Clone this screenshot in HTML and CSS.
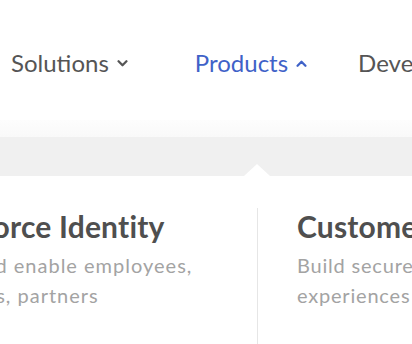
FILE: index.html
```html
<!DOCTYPE html>
<html lang="en">
<head>
    <meta charset="UTF-8">
    <meta name="viewport" content="width=device-width, initial-scale=1.0">
    <title>Products menu</title>
    <link rel="stylesheet" href="styles.css">
</head>
<body>
    <nav class="nav">
        <a class="nav-item nav-item-first">Solutions
            <svg class="chevron" viewBox="0 0 12 8" width="11" height="7"><path d="M1.5 1.5 L6 6 L10.5 1.5" /></svg>
        </a>
        <a class="nav-item active">Products
            <svg class="chevron" viewBox="0 0 12 8" width="11" height="7"><path d="M1.5 6.5 L6 2 L10.5 6.5" /></svg>
        </a>
        <a class="nav-item">Developers</a>
    </nav>

    <div class="shade"></div>
    <div class="band"></div>

    <section class="panel">
        <div class="col col-left">
            <h2 class="col-title">Workforce Identity</h2>
            <p class="col-text">Protect and enable employees, contractors, partners</p>
        </div>
        <div class="col col-right">
            <h2 class="col-title">Customer Identity</h2>
            <p class="col-text">Build secure, seamless customer experiences</p>
        </div>
    </section>
</body>
</html>
```

FILE: styles.css
```css
html, body {
    margin: 0;
    padding: 0;
    width: 412px;
    height: 344px;
    overflow: hidden;
    background: #fff;
    font-family: Lato, "Liberation Sans", sans-serif;
}

.nav {
    display: flex;
    align-items: flex-start;
    gap: 51px;
    height: 120px;
    box-sizing: border-box;
    padding: 48px 0 0 11px;
    white-space: nowrap;
}
.nav-item {
    display: flex;
    align-items: center;
    gap: 8px;
    font-size: 24px;
    line-height: 29px;
    color: #555;
}
.nav-item-first {
    margin-right: 16px;
}
.nav-item.active {
    color: #3f62c8;
}
.chevron {
    margin-top: 2px;
}
.chevron path {
    fill: none;
    stroke: currentColor;
    stroke-width: 2.6;
    stroke-linecap: round;
    stroke-linejoin: round;
}

.shade {
    height: 17px;
    background: linear-gradient(#fdfdfd, #f9f9f9);
}
.band {
    position: relative;
    height: 39px;
    background: #f0f0f0;
}
.band::after {
    content: "";
    position: absolute;
    left: 244px;
    bottom: 0;
    border-left: 13px solid transparent;
    border-right: 13px solid transparent;
    border-bottom: 12px solid #fff;
}

.panel {
    display: flex;
    padding-top: 32px;
}
.col {
    flex: none;
    box-sizing: border-box;
}
.col-left {
    width: 350px;
    margin-left: -93px;
}
.col-right {
    width: 400px;
    padding-left: 39px;
    border-left: 1px solid #e6e6e6;
    height: 140px;
}
.col-title {
    margin: 0;
    font-size: 30px;
    line-height: 36px;
    font-weight: 700;
    color: #4f4f4f;
    letter-spacing: 0.2px;
    white-space: nowrap;
}
.col-text {
    margin: 6px 0 0;
    max-width: 330px;
    font-size: 20px;
    line-height: 30px;
    letter-spacing: 1px;
    color: #a3a3a3;
}
.col-left .col-text {
    margin-left: -12px;
}
.col-right .col-text {
    max-width: 340px;
    letter-spacing: 0.8px;
}
```
